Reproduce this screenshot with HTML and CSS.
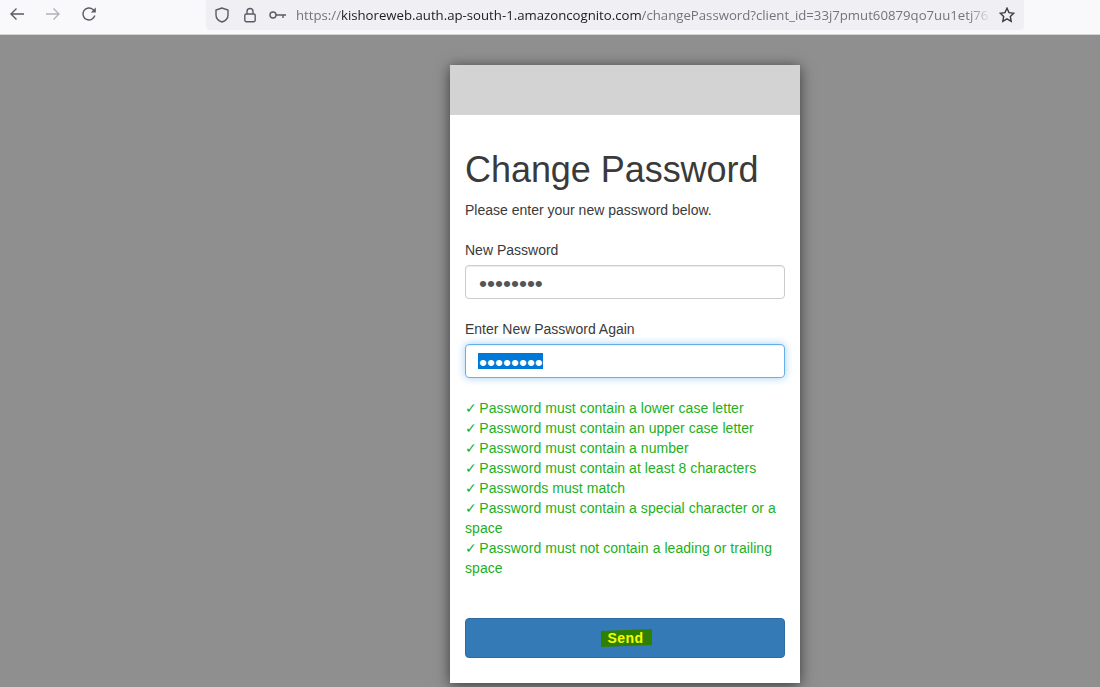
FILE: index.html
```html
<!DOCTYPE html>
<html lang="en">
<head>
<meta charset="utf-8">
<title>Change Password</title>
<link rel="stylesheet" href="styles.css">
</head>
<body>
<header class="toolbar">
  <div class="nav">
    <svg class="icon" viewBox="0 0 16 16"><path d="M15 8H2M7.5 2.5 2 8l5.500 5.500"/></svg>
    <svg class="icon dim" viewBox="0 0 16 16"><path d="M1 8h13M8.500 2.500 14 8l-5.500 5.500"/></svg>
    <svg class="icon" viewBox="0 0 16 16"><path d="M13.800 9.500A6 6 0 1 1 12 3.500L14 5.500"/><path class="fill" d="M14.800 1.500v5h-5z"/></svg>
  </div>
  <div class="urlbar">
    <svg class="icon shield" viewBox="0 0 16 16"><path d="M8 1 2 3v5c0 3.500 3 6 6 7 3-1 6-3.500 6-7V3z"/></svg>
    <svg class="icon lock" viewBox="0 0 16 16"><path d="M5 7V4.500a3 3 0 0 1 6 0V7"/><rect x="2.800" y="7" width="10.400" height="7.800" rx="1.500"/></svg>
    <svg class="icon key" viewBox="0 0 18 10"><circle cx="4" cy="5" r="3"/><path d="M7 5h10M14 5v3"/></svg>
    <div class="url"><span class="muted">https://</span>kishoreweb.auth.ap-south-1.amazoncognito.com<span class="muted">/changePassword?client_id=33j7pmut60879qo7uu1etj76</span></div>
    <svg class="icon star" viewBox="0 0 16 16"><path d="M8 1.200 10 5.600l4.800.6-3.500 3.300.9 4.800L8 11.900l-4.200 2.400.9-4.800L1.200 6.200 6 5.600z"/></svg>
  </div>
</header>
<main class="backdrop">
  <section class="card">
    <div class="card-banner"></div>
    <form class="card-body">
      <h1 class="title">Change Password</h1>
      <p class="lead">Please enter your new password below.</p>
      <label class="label">New Password</label>
      <div class="field"><span class="dots">••••••••</span></div>
      <label class="label">Enter New Password Again</label>
      <div class="field focused"><span class="dots selected">••••••••</span></div>
      <ul class="rules">
        <li><span class="tick">✓</span>Password must contain a lower case letter</li>
        <li><span class="tick">✓</span>Password must contain an upper case letter</li>
        <li><span class="tick">✓</span>Password must contain a number</li>
        <li><span class="tick">✓</span>Password must contain at least 8 characters</li>
        <li><span class="tick">✓</span>Passwords must match</li>
        <li><span class="tick">✓</span>Password must contain a special character or a space</li>
        <li><span class="tick">✓</span>Password must not contain a leading or trailing space</li>
      </ul>
      <button class="send" type="button"><span class="marker">Send</span></button>
    </form>
  </section>
</main>
</body>
</html>
```
FILE: styles.css
```css
* { box-sizing: border-box; }
html, body { margin: 0; height: 100%; overflow: hidden; }
body { background: #8f8f8f; font-family: "Liberation Sans", Arial, sans-serif; color: #3a3a3a; }

.toolbar { height: 35px; display: flex; align-items: flex-start; background: #f9f9fb; border-bottom: 1px solid #d4d4d6; }
.nav { width: 206px; display: flex; padding: 6px 0 0 9px; gap: 20px; flex: none; }
.icon { width: 16px; height: 16px; fill: none; stroke: #5b5b66; stroke-width: 1.400; flex: none; }
.icon.dim { stroke: #b2b2b8; }
.icon .fill { fill: #5b5b66; stroke: none; }

.urlbar { width: 818px; height: 30px; background: #f0f0f4; border-radius: 0 0 4px 4px; display: flex; align-items: center; padding-left: 8px; }
.shield { margin-right: 12px; }
.lock { margin-right: 11px; }
.key { width: 18px; height: 10px; margin-right: 9px; }
.url { width: 695px; font: 13.200px/18px "Open Sans", sans-serif; color: #1c1b22; white-space: nowrap; overflow: hidden; flex: none; -webkit-mask-image: linear-gradient(to left, transparent 0, #000 22px); mask-image: linear-gradient(to left, transparent 0, #000 22px); }
.muted { color: #73737c; }
.star { margin-left: 8px; stroke: #3a3a42; }

.backdrop { display: flex; padding: 30px 0 0 450px; }
.card { width: 350px; height: 618px; background: #fff; box-shadow: 0 2px 13px rgba(0, 0, 0, .6); }
.card-banner { height: 50px; background: #d3d3d3; }
.card-body { padding: 0 15px; display: flex; flex-direction: column; }

.title { margin: 35px 0 0; font-size: 36px; line-height: 40px; font-weight: 400; letter-spacing: -.05px; }
.lead { margin: 10px 0 0; font-size: 14px; line-height: 20px; }
.label { display: block; margin-top: 20px; font-size: 14px; line-height: 20px; }
.field { height: 34px; margin-top: 5px; padding: 0 12px; border: 1px solid #ccc; border-radius: 4px; display: flex; align-items: center; box-shadow: inset 0 1px 1px rgba(0, 0, 0, .075); color: #555; }
.field.focused { border-color: #66afe9; box-shadow: inset 0 1px 1px rgba(0, 0, 0, .075), 0 0 8px rgba(102, 175, 233, .6); }
.dots { font-size: 22.800px; line-height: 18px; height: 16px; padding-left: 1px; }
.selected { background: #0078d7; color: #fff; }

.rules { list-style: none; margin: 20px 0 0; padding: 0; font-size: 14px; line-height: 20px; letter-spacing: .05px; color: #22b022; }
.tick { margin-right: 2.300px; }
.send { height: 40px; margin-top: 40px; background: #337ab7; border: 1px solid #2e6da4; border-radius: 4px; padding: 0; font: 700 14px/18px "Liberation Sans", sans-serif; color: #f4ff00; letter-spacing: .4px; }
.marker { display: inline-block; margin-left: 3px; padding: 0 9px 0 7px; background: #2f8000; clip-path: polygon(0 2px, 100% 0, 100% 16px, 0 100%); }
```
